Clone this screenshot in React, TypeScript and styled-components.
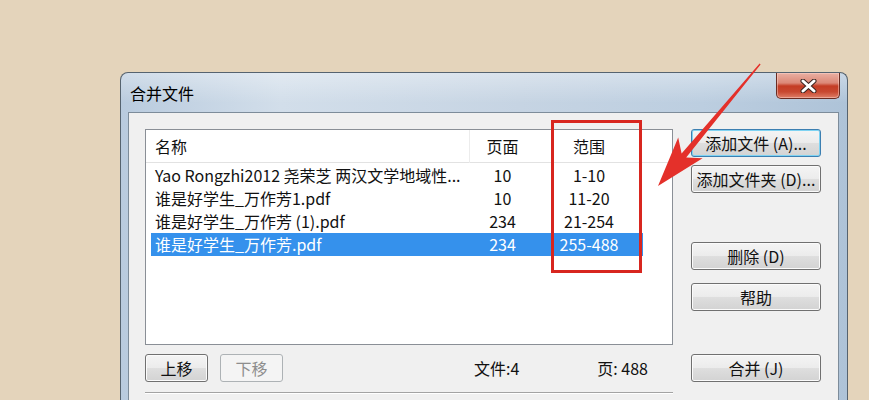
import styled, { createGlobalStyle } from "styled-components";

const GlobalStyle = createGlobalStyle`
  html, body {
    margin: 0;
    padding: 0;
  }
  body {
    background: #e4d4bb;
    font-family: "Noto Sans CJK SC", "Noto Sans", sans-serif;
    overflow: hidden;
  }
`;

const Page = styled.div`
  position: relative;
  width: 869px;
  height: 400px;
  box-sizing: border-box;
  padding: 72px 0 0 120px;
  overflow: hidden;
  background: #e4d4bb;
`;

const Window = styled.div`
  width: 728px;
  box-sizing: border-box;
  border: 1px solid #56636f;
  border-bottom: none;
  border-radius: 8px 8px 0 0;
  padding: 0 8px 0 7px;
  display: flex;
  flex-direction: column;
  background: linear-gradient(
      180deg,
      rgba(255, 255, 255, 0.35) 0px,
      rgba(255, 255, 255, 0) 30px
    ),
    linear-gradient(
      90deg,
      #b9cbde 0%,
      #d2deea 22%,
      #c6d4e3 55%,
      #bccee0 80%,
      #aec3d8 100%
    );
`;

const TitleBar = styled.div`
  height: 39px;
  display: flex;
  align-items: flex-start;
  padding-left: 2px;
`;

const Title = styled.div`
  align-self: center;
  font-size: 16px;
  color: #000;
  line-height: 20px;
`;

const CloseButton = styled.div`
  margin-left: auto;
  margin-right: -1px;
  width: 64px;
  height: 26px;
  box-sizing: border-box;
  border: 1px solid #6a2c22;
  border-top: none;
  border-radius: 0 0 5px 5px;
  display: flex;
  align-items: center;
  justify-content: center;
  background: linear-gradient(
    180deg,
    #eab0a3 0%,
    #dc8877 40%,
    #c43c24 52%,
    #c84830 75%,
    #df7f68 100%
  );
  box-shadow: inset 0 0 0 1px rgba(255, 220, 210, 0.45);
`;

const Client = styled.div`
  border: 1px solid #7d8c9a;
  background: #f0f0f0;
  padding: 16px 17px 20px 16px;
  display: grid;
  grid-template-columns: 528px 130px;
  grid-template-rows: 216px auto;
  column-gap: 18px;
  row-gap: 9px;
`;

const ListBox = styled.div`
  box-sizing: border-box;
  height: 216px;
  border: 1px solid #8a8f96;
  background: #fff;
`;

const ListHeader = styled.div`
  height: 33px;
  box-sizing: border-box;
  border-bottom: 1px solid #e2e2e2;
  padding-left: 5px;
  display: grid;
  grid-template-columns: 319px 65px 108px;
  align-items: center;
  font-size: 16px;
  color: #111;
`;

const HeaderCell = styled.div<{ $align?: string; $divider?: boolean }>`
  text-align: ${(p) => p.$align || "left"};
  padding-left: ${(p) => (p.$align ? "0" : "4px")};
  height: 33px;
  line-height: 32px;
  box-sizing: border-box;
  border-right: ${(p) => (p.$divider ? "1px solid #ececec" : "none")};
`;

const Rows = styled.div`
  padding: 1px 0 0 5px;
`;

const Row = styled.div<{ $selected?: boolean }>`
  width: 492px;
  height: 23px;
  display: grid;
  grid-template-columns: 319px 65px 108px;
  align-items: center;
  font-size: 16px;
  line-height: 23px;
  color: ${(p) => (p.$selected ? "#fff" : "#111")};
  background: ${(p) => (p.$selected ? "#3591ec" : "transparent")};
`;

const Cell = styled.div<{ $align?: string }>`
  text-align: ${(p) => p.$align || "left"};
  padding-left: ${(p) => (p.$align ? "0" : "4px")};
  white-space: nowrap;
  overflow: hidden;
`;

const SideButtons = styled.div`
  display: flex;
  flex-direction: column;
`;

const Button = styled.button<{ $default?: boolean; $top?: number; $width?: number }>`
  height: 28px;
  width: ${(p) => (p.$width ? `${p.$width}px` : "100%")};
  margin-top: ${(p) => p.$top || 0}px;
  box-sizing: border-box;
  padding: 0;
  border: 1px solid ${(p) => (p.$default ? "#3c7fb1" : "#707070")};
  border-radius: 3px;
  background: linear-gradient(
    180deg,
    #f4f4f4 0%,
    #ececec 48%,
    #dedede 52%,
    #d3d3d3 100%
  );
  box-shadow: ${(p) =>
    p.$default ? "inset 0 0 0 1px #7fd3f2" : "inset 0 0 0 1px #fbfbfb"};
  font-family: "Noto Sans CJK SC", "Noto Sans", sans-serif;
  font-size: 16px;
  line-height: 26px;
  color: #111;
  white-space: nowrap;

  &:disabled {
    border-color: #adb2b5;
    background: #f4f4f4;
    box-shadow: none;
    color: #8d8d8d;
  }
`;

const BottomArea = styled.div`
  display: flex;
  flex-direction: column;
`;

const BottomBar = styled.div`
  display: flex;
  align-items: center;
  height: 28px;
`;

const Status = styled.span<{ $left: number }>`
  margin-left: ${(p) => p.$left}px;
  font-size: 16px;
  color: #111;
  white-space: nowrap;
`;

const Separator = styled.div`
  margin-top: 10px;
  border-top: 1px solid #a3a3a3;
  border-bottom: 1px solid #ffffff;
`;

const Annotation = styled.svg`
  position: absolute;
  left: 0;
  top: 0;
  pointer-events: none;
`;

const files = [
  { name: "Yao Rongzhi2012 尧荣芝 两汉文学地域性...", pages: "10", range: "1-10" },
  { name: "谁是好学生_万作芳1.pdf", pages: "10", range: "11-20" },
  { name: "谁是好学生_万作芳 (1).pdf", pages: "234", range: "21-254" },
  { name: "谁是好学生_万作芳.pdf", pages: "234", range: "255-488" },
];

export default function App() {
  return (
    <Page>
      <GlobalStyle />
      <Window>
        <TitleBar>
          <Title>合并文件</Title>
          <CloseButton>
            <svg width="17" height="14" viewBox="0 0 17 14">
              <path d="M3 2 L14 12 M14 2 L3 12" stroke="#3a2320" strokeWidth="5" strokeLinecap="round" />
              <path d="M3 2 L14 12 M14 2 L3 12" stroke="#fff" strokeWidth="3" strokeLinecap="round" />
            </svg>
          </CloseButton>
        </TitleBar>
        <Client>
          <ListBox>
            <ListHeader>
              <HeaderCell $divider>名称</HeaderCell>
              <HeaderCell $align="center">页面</HeaderCell>
              <HeaderCell $align="center">范围</HeaderCell>
            </ListHeader>
            <Rows>
              {files.map((f, i) => (
                <Row key={i} $selected={i === files.length - 1}>
                  <Cell>{f.name}</Cell>
                  <Cell $align="center">{f.pages}</Cell>
                  <Cell $align="center">{f.range}</Cell>
                </Row>
              ))}
            </Rows>
          </ListBox>
          <SideButtons>
            <Button $default>添加文件 (A)...</Button>
            <Button $top={8}>添加文件夹 (D)...</Button>
            <Button $top={49}>删除 (D)</Button>
            <Button $top={13}>帮助</Button>
          </SideButtons>
          <BottomArea>
            <BottomBar>
              <Button $width={63}>上移</Button>
              <Button $width={63} disabled style={{ marginLeft: 12 }}>
                下移
              </Button>
              <Status $left={191}>文件:4</Status>
              <Status $left={78}>页: 488</Status>
            </BottomBar>
            <Separator />
          </BottomArea>
          <Button>合并 (J)</Button>
        </Client>
      </Window>
      <Annotation width="869" height="400" viewBox="0 0 869 400">
        <rect x="552.5" y="121.5" width="88" height="150" fill="none" stroke="#d8261f" strokeWidth="3" />
        <polygon
          points="658,186 702.6,158.3 686.2,157.4 760.6,64.4 759.6,63.6 681.6,153.6 678.2,137.5"
          fill="#e4302a"
        />
      </Annotation>
    </Page>
  );
}
